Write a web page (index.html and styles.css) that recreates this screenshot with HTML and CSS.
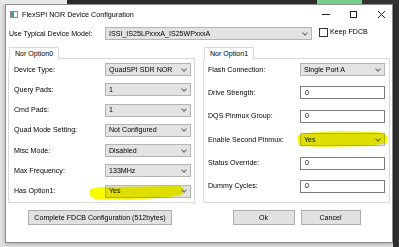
FILE: index.html
```html
<!DOCTYPE html>
<html>
<head>
    <title>FlexSPI NOR Device Configuration</title>
    <link rel="stylesheet" href="styles.css">
</head>
<body>
    <div class="desk">
        <div class="topbar">
            <div class="seg-light"></div>
            <div class="seg-dark"></div>
            <div class="seg-green"></div>
            <div class="seg-black"></div>
        </div>

        <div class="dialog">
            <div class="titlebar">
                <svg class="app-icon" width="8" height="7" viewBox="0 0 8 7">
                    <rect x="0.5" y="0.5" width="7" height="6" fill="#fff" stroke="#8c8c8c"/>
                    <rect x="1" y="1" width="3" height="5" fill="#3aa88c"/>
                </svg>
                <span class="title">FlexSPI NOR Device Configuration</span>
                <div class="controls">
                    <svg class="ctl-min" width="8" height="7" viewBox="0 0 8 7"><line x1="0" y1="3.5" x2="8" y2="3.5" stroke="#222"/></svg>
                    <svg class="ctl-max" width="7" height="7" viewBox="0 0 7 7"><rect x="0.5" y="0.5" width="6" height="6" fill="none" stroke="#222"/></svg>
                    <svg class="ctl-close" width="7" height="7" viewBox="0 0 7 7"><path d="M0 0L7 7M7 0L0 7" stroke="#222"/></svg>
                </div>
            </div>

            <div class="content">
                <div class="model-row">
                    <span class="model-label">Use Typical Device Model:</span>
                    <div class="combo model-combo"><span>ISSI_IS25LPxxxA_IS25WPxxxA</span><i class="chev"></i></div>
                    <span class="checkbox"></span>
                    <span class="check-label">Keep FDCB</span>
                </div>

                <div class="groups">
                    <div class="group">
                        <div class="tab">Nor Option0</div>
                        <div class="pane pane-left">
                            <span>Device Type:</span>
                            <div class="combo"><span>QuadSPI SDR NOR</span><i class="chev"></i></div>
                            <span>Query Pads:</span>
                            <div class="combo"><span>1</span><i class="chev"></i></div>
                            <span>Cmd Pads:</span>
                            <div class="combo"><span>1</span><i class="chev"></i></div>
                            <span>Quad Mode Setting:</span>
                            <div class="combo"><span>Not Configured</span><i class="chev"></i></div>
                            <span>Misc Mode:</span>
                            <div class="combo"><span>Disabled</span><i class="chev"></i></div>
                            <span>Max Frequency:</span>
                            <div class="combo"><span>133MHz</span><i class="chev"></i></div>
                            <span>Has Option1:</span>
                            <div class="combo"><span>Yes</span><i class="chev"></i></div>
                        </div>
                    </div>
                    <div class="group">
                        <div class="tab">Nor Option1</div>
                        <div class="pane pane-right">
                            <span>Flash Connection:</span>
                            <div class="combo"><span>Single Port A</span><i class="chev"></i></div>
                            <span>Drive Strength:</span>
                            <div class="field">0</div>
                            <span>DQS Pinmux Group:</span>
                            <div class="field">0</div>
                            <span>Enable Second Pinmux:</span>
                            <div class="combo"><span>Yes</span><i class="chev"></i></div>
                            <span>Status Override:</span>
                            <div class="field">0</div>
                            <span>Dummy Cycles:</span>
                            <div class="field">0</div>
                        </div>
                    </div>
                </div>

                <div class="actions">
                    <div class="action-cell">
                        <button class="btn btn-wide">Complete FDCB Configuration (512bytes)</button>
                    </div>
                    <div class="action-cell">
                        <button class="btn btn-ok">Ok</button>
                        <button class="btn btn-cancel">Cancel</button>
                    </div>
                </div>
            </div>
        </div>

        <!-- marker strokes drawn over the screenshot -->
        <svg class="marker" width="399" height="247" viewBox="0 0 399 247">
            <path d="M90 189 L100 187 L180 186 L184 188 L182 195 L170 197 L130 200 L95 199 L90 196 Z"/>
            <path d="M297 136 L305 133 L340 131 L380 132 L388 136 L387 143 L370 146 L320 147 L299 146 Z"/>
        </svg>
    </div>
</body>
</html>
```

FILE: styles.css
```css
* {
    box-sizing: border-box;
}
body {
    margin: 0;
    font-family: "Liberation Sans", Arial, sans-serif;
    font-size: 7.1px;
    color: #000;
}
.desk {
    position: relative;
    width: 399px;
    height: 247px;
    overflow: hidden;
    background: linear-gradient(to right, #e3e3e3 393px, #2f2f2f 393px);
}
.topbar {
    display: flex;
    height: 4px;
}
.seg-light { width: 67px; background: #e6e8ea; }
.seg-dark { width: 250px; background: #2b2b2b; }
.seg-green { width: 45px; background: #74d08e; }
.seg-black { flex: 1; background: #333; }

.dialog {
    margin-left: 5px;
    width: 388px;
    height: 239px;
    background: #fff;
    border: 1px solid #8c8c8c;
    box-shadow: 0 1px 4px rgba(0,0,0,0.3);
    display: flex;
    flex-direction: column;
}
.titlebar {
    display: flex;
    align-items: center;
    height: 19px;
    padding-left: 4px;
}
.app-icon {
    margin-right: 4px;
}
.title {
    font-size: 7.2px;
}
.controls {
    margin-left: auto;
    display: flex;
    align-items: center;
    padding-right: 7px;
}
.ctl-max { margin-left: 20px; }
.ctl-close { margin-left: 21px; }

.content {
    padding: 2px 3px 0 1px;
}
.model-row {
    display: flex;
    align-items: center;
    height: 15px;
    padding-left: 2px;
}
.model-label {
    width: 96px;
}
.model-combo {
    width: 207px;
    height: 15px;
}
.checkbox {
    width: 9px;
    height: 9px;
    margin-left: 7px;
    margin-top: -3px;
    border: 1px solid #333;
    background: #fff;
}
.check-label {
    margin-left: 2px;
    margin-top: -4px;
}

.combo {
    position: relative;
    display: flex;
    align-items: center;
    height: 13px;
    padding-left: 3px;
    background: #e3e3e3;
    border: 1px solid #b4b4b4;
}
.chev {
    position: absolute;
    right: 4px;
    top: 50%;
    width: 4px;
    height: 4px;
    margin-top: -3px;
    border-right: 1px solid #666;
    border-bottom: 1px solid #666;
    transform: rotate(45deg);
}
.field {
    display: flex;
    align-items: center;
    height: 13px;
    padding-left: 4px;
    background: #fff;
    border: 1px solid #7a7a7a;
}

.groups {
    display: grid;
    grid-template-columns: 187px 187px;
    gap: 8px;
    margin-top: 6px;
    padding-left: 1px;
}
.tab {
    position: relative;
    z-index: 1;
    width: 50px;
    height: 12px;
    margin-left: 1px;
    margin-bottom: -1px;
    display: flex;
    align-items: center;
    justify-content: center;
    background: #fff;
    border: 1px solid #d9d9d9;
    border-bottom: none;
}
.pane {
    height: 145px;
    border: 1px solid #d9d9d9;
    display: grid;
    grid-auto-rows: 13px;
    align-items: center;
    align-content: start;
}
.pane-left {
    grid-template-columns: 1fr 86px;
    row-gap: 7.3px;
    padding: 4px 3px 0 5px;
}
.pane-right {
    grid-template-columns: 1fr 85px;
    row-gap: 10.4px;
    padding: 4px 4px 0 4px;
}

.actions {
    display: grid;
    grid-template-columns: 187px 187px;
    gap: 8px;
    margin-top: 7px;
    padding-left: 1px;
}
.action-cell {
    display: flex;
    justify-content: center;
    gap: 6px;
}
.action-cell:first-child {
    padding-right: 3px;
}
.btn {
    height: 15px;
    padding: 0;
    font: inherit;
    color: #000;
    background: #e1e1e1;
    border: 1px solid #adadad;
}
.btn-wide { width: 144px; }
.btn-ok { width: 62px; }
.btn-cancel { width: 60px; }

.marker {
    position: absolute;
    left: 0;
    top: 0;
    mix-blend-mode: multiply;
    fill: #fafa00;
    pointer-events: none;
}
```
